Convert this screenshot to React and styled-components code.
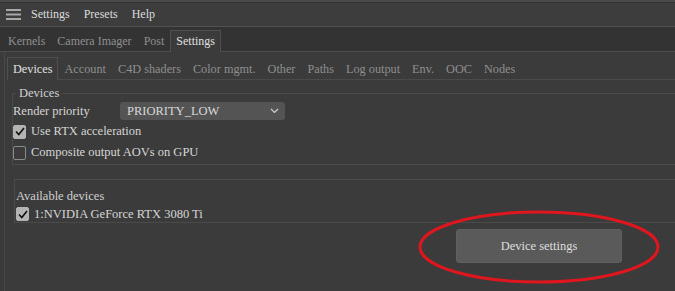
import React from "react";
import styled, { createGlobalStyle } from "styled-components";

const GlobalStyle = createGlobalStyle`
  html, body {
    margin: 0;
    padding: 0;
    background: #3b3b3b;
  }
  * {
    box-sizing: border-box;
  }
`;

const Window = styled.div`
  position: relative;
  width: 675px;
  height: 291px;
  overflow: hidden;
  background: #3b3b3b;
  font-family: "Liberation Serif", "DejaVu Serif", serif;
  font-size: 12px;
  color: #d6d6d6;
`;

const MenuBar = styled.div`
  height: 27px;
  display: flex;
  align-items: center;
  padding: 0 0 0 6px;
  background: #3d3d3d;
  border-top: 2px solid #4a4a4a;
  border-bottom: 1px solid #525252;
  box-shadow: inset 0 1px 0 #333;
`;

const MenuItem = styled.span`
  color: #dcdcdc;
  font-size: 12px;
  margin-top: 1px;
  padding-right: 14px;
`;

const Hamburger = styled.svg`
  width: 15px;
  height: 11px;
  margin-right: 10px;
`;

const TabBar = styled.div`
  height: 25px;
  display: flex;
  align-items: flex-end;
  padding-left: 2px;
  background: #333333;
  border-bottom: 1px solid #4d4d4d;
`;

const Tab = styled.div`
  height: ${(p) => (p.$small ? "23px" : "22px")};
  display: flex;
  align-items: center;
  padding: 0 5px;
  margin-bottom: -1px;
  color: ${(p) => (p.$active ? "#e0e0e0" : "#8f8f8f")};
  background: ${(p) => (p.$active ? "#3b3b3b" : "transparent")};
  border: 1px solid ${(p) => (p.$active ? "#4f4f4f" : "transparent")};
  border-bottom: none;
  font-size: ${(p) => (p.$small ? "12.25px" : "12px")};
  white-space: nowrap;
`;

const Panel = styled.div`
  margin-left: 4px;
  height: 240px;
  border-left: 1px solid #484848;
  padding: 4px 0 0 2px;
`;

const SubTabBar = styled.div`
  height: 24px;
  display: flex;
  align-items: flex-end;
  border-bottom: 1px solid #4a4a4a;
`;

const GroupBox = styled.fieldset`
  margin: 6px 0 0 5px;
  padding: 0 0 1px 0;
  border: 1px solid #4a4a4a;
  border-right: none;
  min-width: 0;
`;

const Legend = styled.legend`
  padding: 0 3px;
  margin-left: 3px;
  color: #d0d0d0;
  font-size: 12.5px;
`;

const Row = styled.div`
  display: flex;
  align-items: center;
  height: ${(p) => p.$h || 21}px;
`;

const Label = styled.span`
  width: 107px;
  color: #d6d6d6;
  font-size: 12.5px;
`;

const Select = styled.div`
  width: 165px;
  height: 18px;
  display: flex;
  align-items: center;
  justify-content: space-between;
  padding: 0 6px 0 7px;
  background: #545454;
  border-radius: 3px;
  color: #d8d8d8;
  font-size: 12.5px;
`;

const CheckRow = styled.label`
  display: flex;
  align-items: center;
  gap: 5px;
  height: 21px;
  color: #d6d6d6;
  font-size: 12.5px;
`;

const Box = styled.span`
  width: 13px;
  height: 14px;
  border-radius: 2px;
  display: flex;
  align-items: center;
  justify-content: center;
  background: ${(p) => (p.$checked ? "#b4b4b4" : "transparent")};
  border: 1px solid ${(p) => (p.$checked ? "#b4b4b4" : "#8a8a8a")};
`;

const DeviceGroup = styled.div`
  margin: 14px 0 0 7px;
  height: 44px;
  border-top: 1px solid #4a4a4a;
  border-left: 1px solid #4a4a4a;
  border-bottom: 1px solid #4a4a4a;
  padding: 7px 0 0 1px;
  display: flex;
  flex-direction: column;
`;

const Caption = styled.div`
  height: 19px;
  flex-shrink: 0;
  display: flex;
  align-items: center;
  color: #d0d0d0;
  font-size: 12.5px;
`;

const Footer = styled.div`
  display: flex;
  justify-content: flex-end;
  padding: 6px 53px 0 0;
`;

const Button = styled.button`
  width: 166px;
  height: 34px;
  background: #5a5a5a;
  border: 1px solid #606060;
  border-radius: 3px;
  color: #dedede;
  font-family: inherit;
  font-size: 12.5px;
`;

const Ellipse = styled.svg`
  position: absolute;
  left: 417px;
  top: 209px;
  width: 244px;
  height: 76px;
  pointer-events: none;
`;

const Check = ({ checked }) => (
  <Box $checked={checked}>
    {checked && (
      <svg width="10" height="9" viewBox="0 0 10 9">
        <path d="M1 4.5 L3.8 7.5 L9 1" fill="none" stroke="#111" strokeWidth="1.6" />
      </svg>
    )}
  </Box>
);

const topTabs = ["Kernels", "Camera Imager", "Post", "Settings"];
const subTabs = ["Devices", "Account", "C4D shaders", "Color mgmt.", "Other", "Paths", "Log output", "Env.", "OOC", "Nodes"];

export default function App() {
  return (
    <>
      <GlobalStyle />
      <Window>
        <MenuBar>
          <Hamburger viewBox="0 0 15 11">
            <rect x="0" y="0" width="15" height="2" fill="#a8a8a8" />
            <rect x="0" y="4.5" width="15" height="2" fill="#a8a8a8" />
            <rect x="0" y="9" width="15" height="2" fill="#a8a8a8" />
          </Hamburger>
          <MenuItem>Settings</MenuItem>
          <MenuItem>Presets</MenuItem>
          <MenuItem>Help</MenuItem>
        </MenuBar>
        <TabBar>
          {topTabs.map((t) => (
            <Tab key={t} $active={t === "Settings"}>{t}</Tab>
          ))}
        </TabBar>
        <Panel>
          <SubTabBar>
            {subTabs.map((t) => (
              <Tab key={t} $small $active={t === "Devices"}>{t}</Tab>
            ))}
          </SubTabBar>
          <GroupBox>
            <Legend>Devices</Legend>
            <Row $h={20}>
              <Label>Render priority</Label>
              <Select>
                PRIORITY_LOW
                <svg width="9" height="6" viewBox="0 0 9 6">
                  <path d="M1 1 L4.5 4.5 L8 1" fill="none" stroke="#cfcfcf" strokeWidth="1.2" />
                </svg>
              </Select>
            </Row>
            <CheckRow>
              <Check checked />
              Use RTX acceleration
            </CheckRow>
            <CheckRow>
              <Check />
              Composite output AOVs on GPU
            </CheckRow>
          </GroupBox>
          <DeviceGroup>
            <Caption>Available devices</Caption>
            <CheckRow>
              <Check checked />
              1:NVIDIA GeForce RTX 3080 Ti
            </CheckRow>
          </DeviceGroup>
          <Footer>
            <Button>Device settings</Button>
          </Footer>
        </Panel>
        <Ellipse viewBox="0 0 244 76">
          <ellipse cx="122" cy="38" rx="119" ry="35" fill="none" stroke="#e0161e" strokeWidth="3" />
        </Ellipse>
      </Window>
    </>
  );
}
